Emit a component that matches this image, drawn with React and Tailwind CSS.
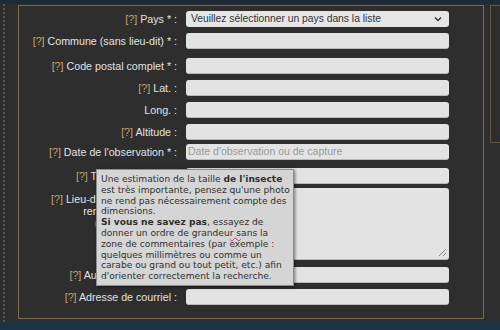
import React from "react";

const Q = () => <span className="text-[#c8a66a]">[?]</span>;

function Label({ children, className = "" }) {
  return (
    <div className={`w-[158px] shrink-0 text-right text-[10.7px] leading-[12px] text-[#e2e2e2] whitespace-nowrap ${className}`}>
      {children}
    </div>
  );
}

function Input({ placeholder, className = "" }) {
  return (
    <div className={`w-[263px] h-[16px] rounded-[3px] bg-[#e3e3e3] border-b border-[#b9b9b9] flex items-center px-[2px] text-[10.5px] text-[#9a9a9a] ${className}`}>
      {placeholder}
    </div>
  );
}

const tipLines = [
  <>Une estimation de la taille <b>de l'insecte</b></>,
  <>est très importante, pensez qu'une photo</>,
  <>ne rend pas nécessairement compte des</>,
  <>dimensions.</>,
  <><b>Si vous ne savez pas</b>, essayez de</>,
  <>donner un ordre de grandeu<span className="underline decoration-wavy decoration-[#e0306a]">r s</span>ans la</>,
  <>zone de commentaires (par exemple :</>,
  <>quelques millimètres ou comme un</>,
  <>carabe ou grand ou tout petit, etc.) afin</>,
  <>d'orienter correctement la recherche.</>,
];

export default function App() {
  return (
    <div className="w-[500px] h-[330px] bg-[#2e2e2e] flex flex-col overflow-hidden" style={{ fontFamily: '"Liberation Sans", Arial, sans-serif' }}>
      <div className="h-[4px] bg-[#1e2b36] shrink-0" />
      <div className="flex flex-1 min-h-0">
        <div className="w-[18px] shrink-0 pl-[3px]">
          <div className="h-full border-l-2 border-dotted border-[#5e5548]" />
        </div>
        <div className="w-[466px] h-[314px] mt-[1px] border border-[#7a6b4d] relative shrink-0">
          <div className="flex flex-col">
            <div className="flex items-center gap-[9px] mt-[5px]">
              <Label><Q /> Pays * :</Label>
              <div className="w-[263px] h-[16px] rounded-[3px] bg-[#e6e6e6] flex items-center justify-between pl-[5px] pr-[7px] text-[10.3px] text-[#333]">
                <span>Veuillez sélectionner un pays dans la liste</span>
                <svg width="8" height="6" viewBox="0 0 8 6" fill="none" stroke="#333" strokeWidth="1.4">
                  <path d="M1 1.5 L4 4.5 L7 1.5" />
                </svg>
              </div>
            </div>
            <div className="flex items-center gap-[9px] mt-[6px]">
              <Label><Q /> Commune (sans lieu-dit) * :</Label>
              <Input />
            </div>
            <div className="flex items-center gap-[9px] mt-[9px]">
              <Label><Q /> Code postal complet * :</Label>
              <Input />
            </div>
            <div className="flex items-center gap-[9px] mt-[6px]">
              <Label><Q /> Lat. :</Label>
              <Input />
            </div>
            <div className="flex items-center gap-[9px] mt-[6px]">
              <Label>Long. :</Label>
              <Input />
            </div>
            <div className="flex items-center gap-[9px] mt-[6px]">
              <Label><Q /> Altitude :</Label>
              <Input />
            </div>
            <div className="flex items-center gap-[9px] mt-[4px]">
              <Label><Q /> Date de l'observation * :</Label>
              <Input placeholder="Date d'observation ou de capture" />
            </div>
            <div className="flex items-center gap-[9px] mt-[8px]">
              <Label><Q /> Taille de l'insecte :</Label>
              <Input />
            </div>
            <div className="flex items-start gap-[9px] mt-[4px]">
              <Label className="pt-[5px] leading-[11.5px]">
                <Q /> Lieu-dit, commentaires,<br />remarques diverses<br />(taille, habitat...) :
              </Label>
              <div className="relative w-[263px] h-[72px] rounded-[3px] bg-[#e3e3e3] border-b border-[#b9b9b9]">
                <svg className="absolute right-[2px] bottom-[2px]" width="9" height="9" viewBox="0 0 9 9" stroke="#8a8a8a" strokeWidth="1">
                  <path d="M8 1 L1 8 M8 5 L5 8" />
                </svg>
              </div>
            </div>
            <div className="flex items-center gap-[9px] mt-[7px]">
              <Label><Q /> Auteur de la photo :</Label>
              <Input />
            </div>
            <div className="flex items-center gap-[9px] mt-[6px]">
              <Label><Q /> Adresse de courriel :</Label>
              <Input />
            </div>
          </div>

          <div
            className="absolute left-[77px] top-[163px] w-[198px] h-[117px] bg-[#d5d5d5] border border-[#8c8c8c] shadow-[1px_1px_3px_rgba(0,0,0,0.5)] pl-[4px] pt-[4px] text-[9.1px] leading-[10.8px] text-[#2f2f2f]"
            style={{ fontFamily: '"DejaVu Sans", Verdana, sans-serif' }}
          >
            {tipLines.map((l, i) => (
              <div key={i} className="whitespace-nowrap">{l}</div>
            ))}
          </div>
        </div>
        <div className="flex-1 ml-[6px] h-[138px] mt-[1px] border-l border-t border-b border-[#5f5640]" />
      </div>
      <div className="h-[8px] bg-[#1b3341] shrink-0" />
    </div>
  );
}
